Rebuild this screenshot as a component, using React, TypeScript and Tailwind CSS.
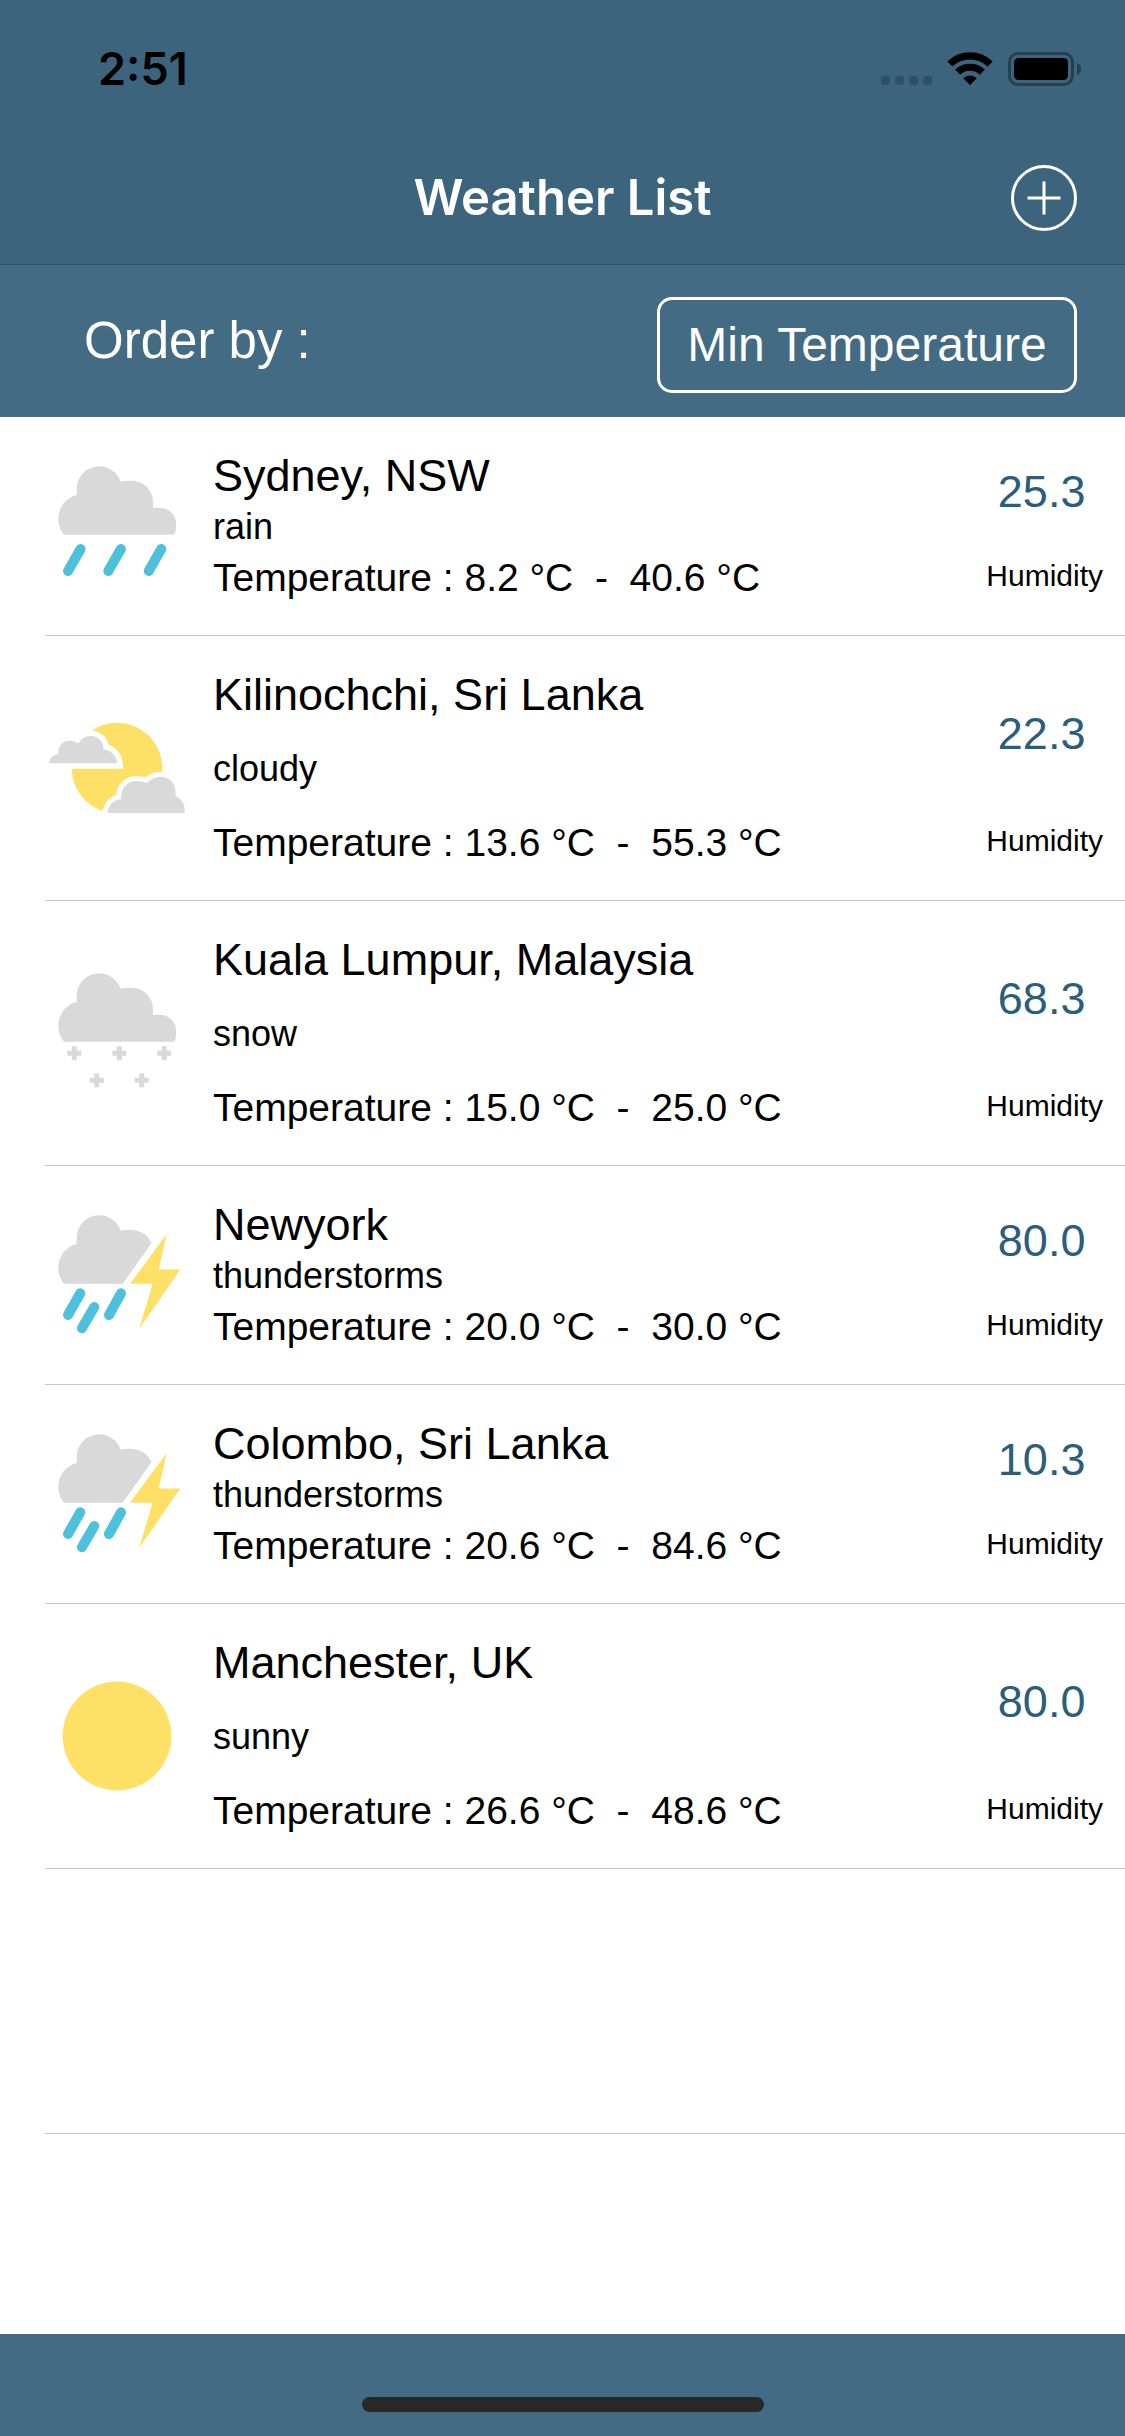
import React from "react";

type Condition = "rain" | "cloudy" | "snow" | "thunderstorms" | "sunny";

interface CityWeather {
  city: string;
  condition: Condition;
  min: string;
  max: string;
  humidity: string;
}

const cities: CityWeather[] = [
  { city: "Sydney, NSW", condition: "rain", min: "8.2", max: "40.6", humidity: "25.3" },
  { city: "Kilinochchi, Sri Lanka", condition: "cloudy", min: "13.6", max: "55.3", humidity: "22.3" },
  { city: "Kuala Lumpur, Malaysia", condition: "snow", min: "15.0", max: "25.0", humidity: "68.3" },
  { city: "Newyork", condition: "thunderstorms", min: "20.0", max: "30.0", humidity: "80.0" },
  { city: "Colombo, Sri Lanka", condition: "thunderstorms", min: "20.6", max: "84.6", humidity: "10.3" },
  { city: "Manchester, UK", condition: "sunny", min: "26.6", max: "48.6", humidity: "80.0" },
];

const GREY = "#d9d9d9";
const YELLOW = "#ffe066";
const BLUE = "#4dc0dc";

const CLOUD =
  "M15 76.7A25 25 0 0 1 9.3 61A24.3 24.3 0 0 1 27.7 37V31A22.4 22.4 0 0 1 50 8.3A23 23 0 0 1 71.7 23.7A40 40 0 0 1 82.7 22.7A21.4 21.4 0 0 1 104 44.2V49.7H111A16.3 16.3 0 0 1 127 66A20 20 0 0 1 125.3 76.7Z";

function Rain() {
  return (
    <>
      <path d={CLOUD} fill={GREY} />
      <g stroke={BLUE} strokeWidth="10" strokeLinecap="round">
        <path d="M31.6 91L19 113M71.9 91L59.3 113M112.3 91L99.7 113" />
      </g>
    </>
  );
}

function Cloudy() {
  const upper =
    "M0.3 63.3A9.2 9.2 0 0 1 9.3 54V51.7A11 11 0 0 1 20.3 40.7A14 14 0 0 1 29.3 43.3A15 15 0 0 1 41.7 36A12.8 12.8 0 0 1 54.5 49.3A15.5 15.5 0 0 1 68.3 63.3Z";
  const lower =
    "M58.7 113A14.5 14.5 0 0 1 72.3 99V95.7A15 15 0 0 1 87.7 81A22 22 0 0 1 97.7 83.3A19 19 0 0 1 111.7 76.7A14.9 14.9 0 0 1 126.5 91.5V96A16 16 0 0 1 135.7 108V113Z";
  return (
    <>
      <circle cx="68" cy="68" r="45.3" fill={YELLOW} />
      <path d={upper} fill="#fff" stroke="#fff" strokeWidth="11" />
      <path d={lower} fill="#fff" stroke="#fff" strokeWidth="10" />
      <path d={upper} fill={GREY} />
      <path d={lower} fill={GREY} />
    </>
  );
}

function Snow() {
  return (
    <>
      <path d={CLOUD} fill={GREY} />
      <path
        d="M18.3 88.3h14M25.3 81.3v14M63.3 88.3h14M70.3 81.3v14M108.3 88.3h14M115.3 81.3v14M40.7 115.3h14M47.7 108.3v14M85.7 115.3h14M92.7 108.3v14"
        stroke={GREY}
        strokeWidth="5"
      />
    </>
  );
}

function Thunderstorms() {
  return (
    <>
      <path
        d="M15 76.7A25 25 0 0 1 9.3 61A24.3 24.3 0 0 1 27.7 37V31A22.4 22.4 0 0 1 50 8.3A23 23 0 0 1 71.7 23.7A40 40 0 0 1 82.7 22.7A24 24 0 0 1 102.6 36L73.7 76.7Z"
        fill={GREY}
      />
      <path d="M117.7 27L109.7 62.5H131.3L90 122.3L103.7 76.8H81Z" fill={YELLOW} />
      <g stroke={BLUE} strokeWidth="10" strokeLinecap="round">
        <path d="M31.3 86.3L19 108M45.3 100L32.9 121.3M72 86.3L60 108" />
      </g>
    </>
  );
}

function Sunny() {
  return <circle cx="68" cy="68" r="54.4" fill={YELLOW} />;
}

const icons: Record<Condition, () => React.ReactElement> = {
  rain: Rain,
  cloudy: Cloudy,
  snow: Snow,
  thunderstorms: Thunderstorms,
  sunny: Sunny,
};

function rowHeight(condition: Condition) {
  return condition === "rain" || condition === "thunderstorms" ? "min-h-[219px]" : "min-h-[265px]";
}

function WeatherRow({ item }: { item: CityWeather }) {
  const Icon = icons[item.condition];
  return (
    <li className={`ml-[45px] flex border-b border-[#c8c7cc] ${rowHeight(item.condition)}`}>
      <div className="ml-1 flex items-center">
        <svg viewBox="0 0 136 136" className="size-[136px]" fill="none" role="img" aria-label={item.condition}>
          <Icon />
        </svg>
      </div>
      <div className="ml-7 flex flex-1 flex-col justify-between pt-[33px] pb-[30px] text-black">
        <h2 className="text-[45px] leading-[52px]">{item.city}</h2>
        <p className="text-[36px] leading-[42px]">{item.condition}</p>
        <p className="text-[39px] leading-[54px] whitespace-pre">
          {`Temperature : ${item.min} °C  -  ${item.max} °C`}
        </p>
      </div>
      <div className="flex flex-col items-center pt-2 pr-[22px] pb-[41px]">
        <div className="flex flex-1 items-center pr-1.5">
          <span className="text-[45px] leading-[52px] text-[#2b5d7d]">{item.humidity}</span>
        </div>
        <span className="text-[30px] leading-9 text-black">Humidity</span>
      </div>
    </li>
  );
}

function StatusBar() {
  return (
    <div className="flex h-[132px] items-center justify-between pt-[6px] pr-11 pl-[98px]">
      <span className="font-['Inter',sans-serif] text-[45px] leading-[54px] font-semibold text-black">2:51</span>
      <div className="flex items-center">
        <svg viewBox="0 0 51 34" className="h-[34px] w-[51px]" fill="#2f4f64" aria-hidden="true">
          <rect x="0" y="24" width="9" height="9" rx="3.5" />
          <rect x="14" y="24" width="9" height="9" rx="3.5" />
          <rect x="28" y="24" width="9" height="9" rx="3.5" />
          <rect x="42" y="24" width="9" height="9" rx="3.5" />
        </svg>
        <svg viewBox="0 0 46 34" className="ml-[15px] h-[34px] w-[46px]" aria-hidden="true">
          <g fill="none" stroke="#000" strokeWidth="7.2">
            <path d="M2.8 12A29.3 29.3 0 0 1 43.2 12" />
            <path d="M10.6 20.2A18 18 0 0 1 35.4 20.2" />
          </g>
          <path d="M23 33L16.2 26.2A9.8 9.8 0 0 1 29.8 26.2Z" fill="#000" />
        </svg>
        <svg viewBox="0 0 73 34" className="ml-[15px] h-[34px] w-[73px]" aria-hidden="true">
          <rect x="1.5" y="1.5" width="63" height="31" rx="8.5" fill="none" stroke="#253f4e" strokeWidth="3" />
          <rect x="6" y="6" width="54" height="22" rx="4.5" fill="#000" />
          <path d="M69 11Q73 13 73 17Q73 21 69 23Z" fill="#253f4e" />
        </svg>
      </div>
    </div>
  );
}

export default function App() {
  return (
    <div className="flex min-h-screen flex-col bg-[#436b83] font-['Liberation_Sans',Arial,sans-serif]">
      <header className="border-b border-[#305163] bg-[#3c647c]">
        <StatusBar />
        <div className="grid h-[132px] grid-cols-[1fr_auto_1fr] items-center px-12">
          <h1 className="col-start-2 font-['Inter',sans-serif] text-[49px] leading-[60px] font-semibold text-white">
            Weather List
          </h1>
          <button type="button" aria-label="Add city" className="col-start-3 size-[66px] justify-self-end">
            <svg viewBox="0 0 66 66" className="size-full" fill="none" stroke="#fff" strokeWidth="3">
              <circle cx="33" cy="33" r="31.5" />
              <path d="M16.5 33h33M33 16.5v33" />
            </svg>
          </button>
        </div>
      </header>

      <section className="flex items-center justify-between pt-8 pr-12 pb-6 pl-[84px] text-white">
        <span id="order-label" className="pb-[8px] text-[51px] leading-[60px]">
          Order by :
        </span>
        <button
          type="button"
          aria-labelledby="order-label order-value"
          className="h-24 w-[420px] rounded-[15px] border-3 border-white text-center text-[48px] leading-[56px]"
        >
          <span id="order-value">Min Temperature</span>
        </button>
      </section>

      <main className="flex-1 bg-white">
        <ul>
          {cities.map((item) => (
            <WeatherRow key={item.city} item={item} />
          ))}
        </ul>
        <div className="ml-[45px] h-[265px] border-b border-[#c8c7cc]" />
      </main>

      <footer className="flex h-[102px] items-end justify-center pb-6">
        <div className="h-[15px] w-[402px] rounded-full bg-[#282828]" />
      </footer>
    </div>
  );
}
